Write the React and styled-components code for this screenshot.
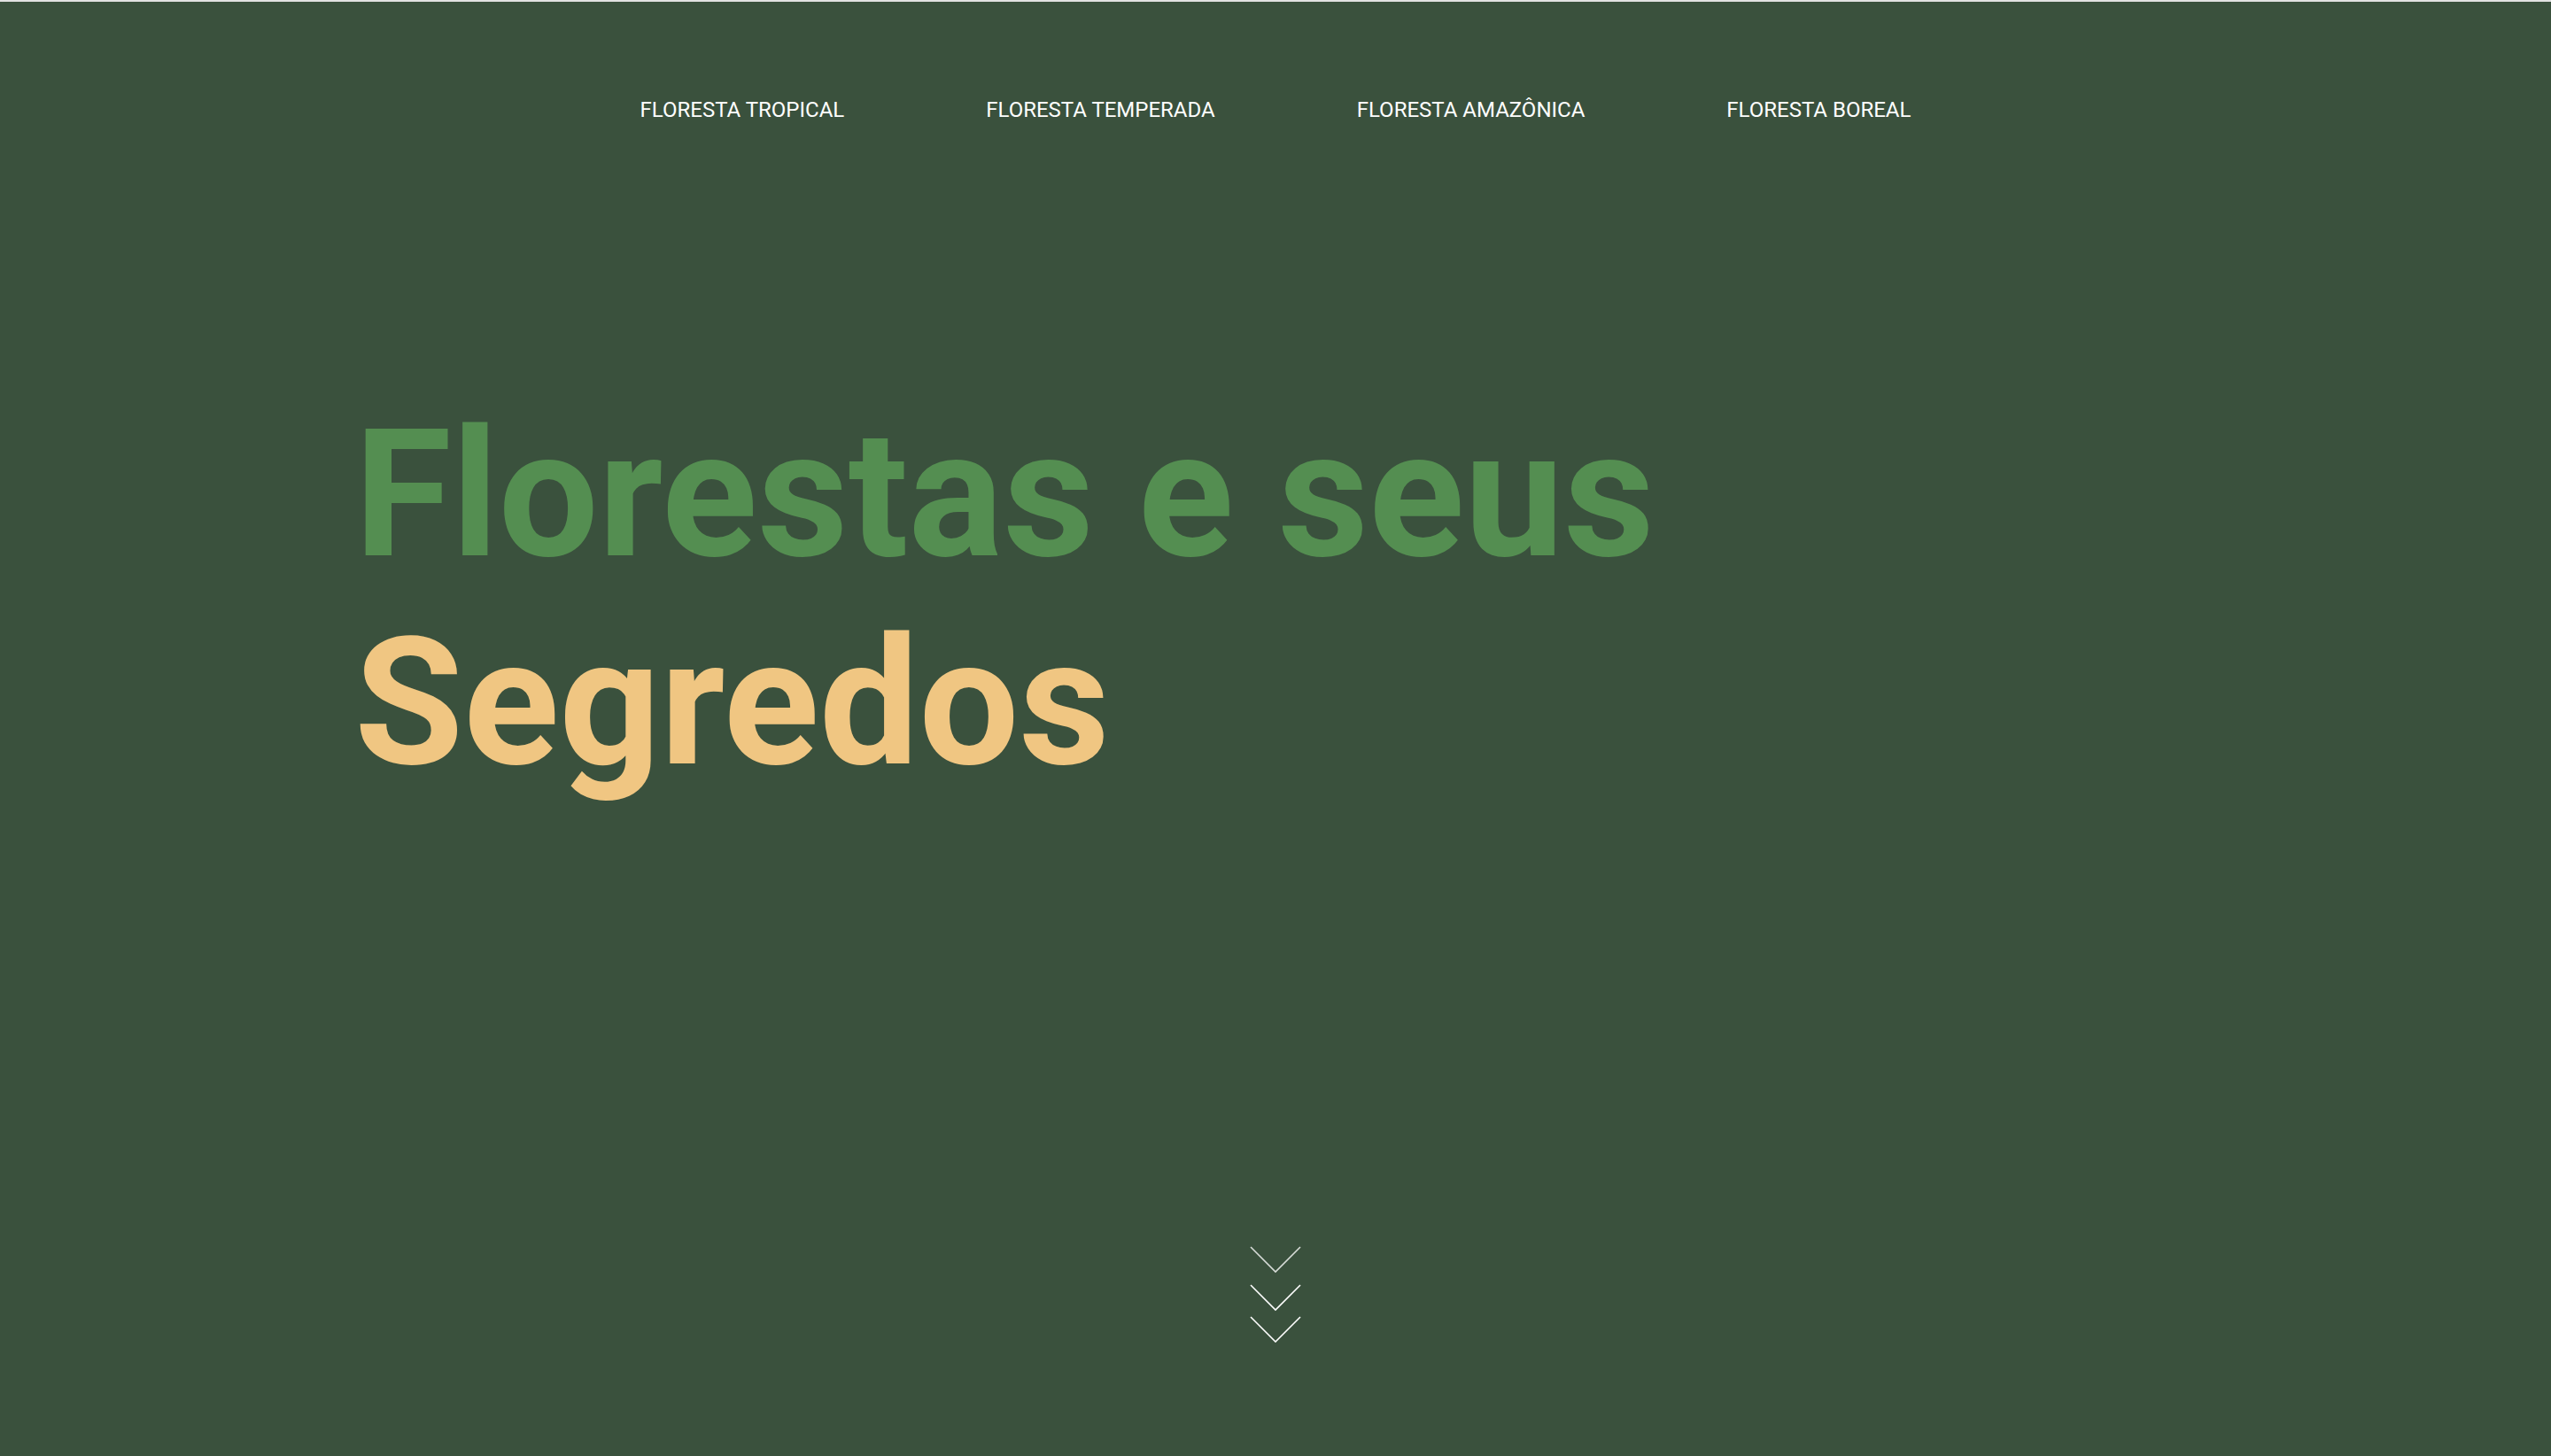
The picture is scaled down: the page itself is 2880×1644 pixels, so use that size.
import React from "react";
import styled, { createGlobalStyle } from "styled-components";

const GlobalStyle = createGlobalStyle`
  * {
    box-sizing: border-box;
  }
  body {
    margin: 0;
    font-family: Roboto, "Liberation Sans", sans-serif;
    background-color: #3a513d;
  }
`;

const Page = styled.div`
  display: flex;
  flex-direction: column;
  height: 100vh;
  border-top: 2px solid #e2e2e2;
  background-color: #3a513d;
`;

const Nav = styled.nav`
  display: flex;
  justify-content: center;
  gap: 160px;
  padding-top: 108px;
`;

const NavLink = styled.a`
  color: #ffffff;
  font-size: 24px;
  line-height: 28px;
  text-transform: uppercase;
  text-decoration: none;
  cursor: pointer;
`;

const Hero = styled.section`
  padding: 303px 0 0 400px;
`;

const Title = styled.h1`
  margin: 0;
  font-size: 200px;
  font-weight: 700;
  line-height: 235px;
`;

const TitleLine = styled.span`
  display: block;
  color: ${(p) => p.color};
`;

const ScrollDown = styled.div`
  display: flex;
  justify-content: center;
  margin-top: auto;
  padding-bottom: 128px;
`;

const Chevrons = () => (
  <svg width="58" height="109" viewBox="0 0 58 109" fill="none">
    <polyline points="1,1 29,29 57,1" stroke="#ffffff" strokeOpacity="0.8" strokeWidth="1.6" />
    <polyline points="1,44 29,72 57,44" stroke="#ffffff" strokeWidth="1.6" />
    <polyline points="1,80 29,108 57,80" stroke="#ffffff" strokeWidth="1.6" />
  </svg>
);

const links = [
  "Floresta Tropical",
  "Floresta Temperada",
  "Floresta Amazônica",
  "Floresta Boreal",
];

const App = () => (
  <>
    <GlobalStyle />
    <Page>
      <Nav>
        {links.map((l) => (
          <NavLink key={l}>{l}</NavLink>
        ))}
      </Nav>
      <Hero>
        <Title>
          <TitleLine color="#548e51">Florestas e seus</TitleLine>
          <TitleLine color="#f0c682">Segredos</TitleLine>
        </Title>
      </Hero>
      <ScrollDown>
        <Chevrons />
      </ScrollDown>
    </Page>
  </>
);

export default App;
